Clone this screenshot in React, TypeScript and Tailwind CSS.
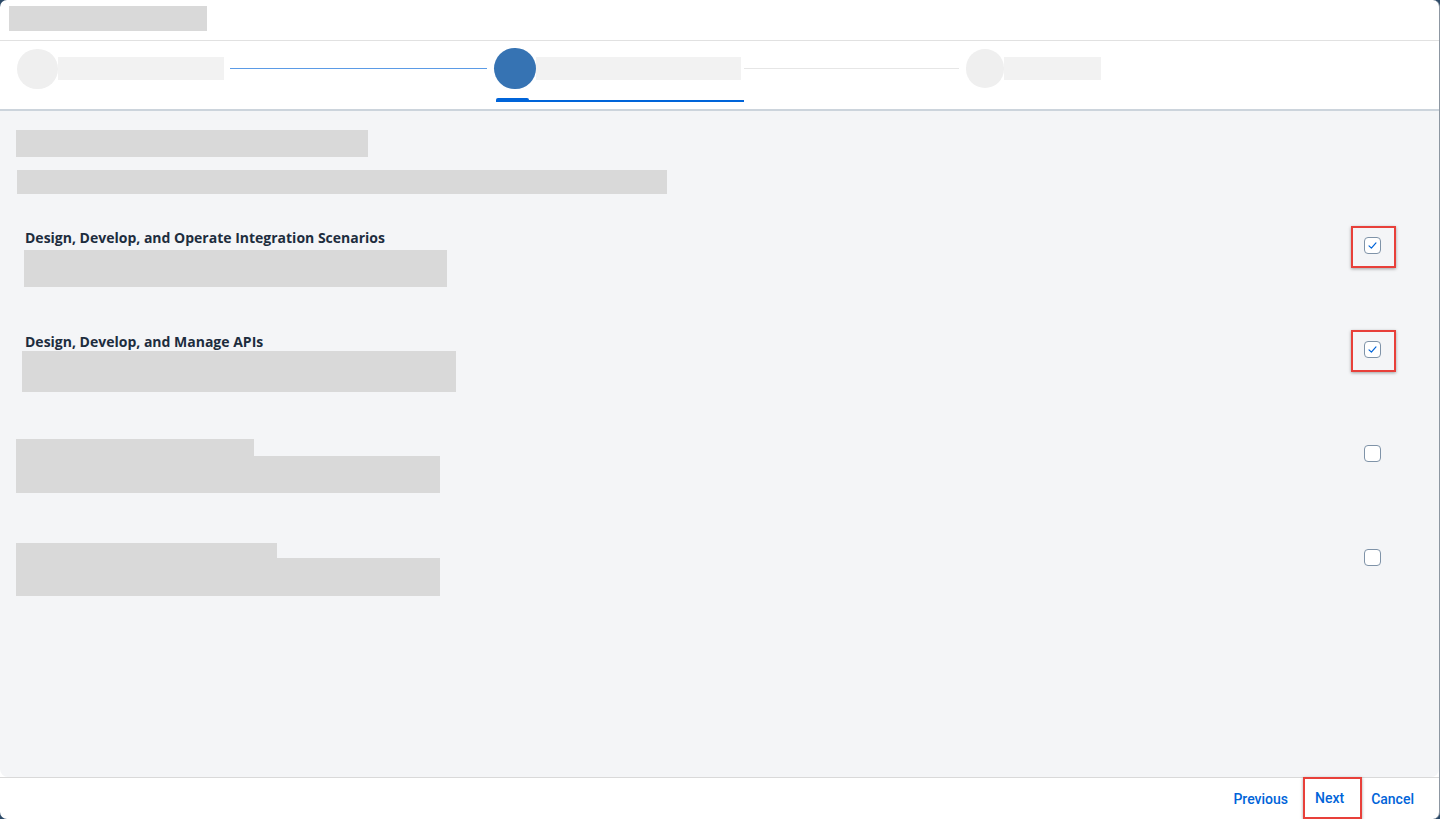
import React from 'react';

const font = { fontFamily: 'Roboto, "Liberation Sans", Arial, sans-serif' };
const titleFont = { fontFamily: '"Open Sans", "Noto Sans", Arial, sans-serif' };

interface RowProps {
  title?: string;
  checked: boolean;
  highlighted: boolean;
  children: React.ReactNode;
}

const Checkbox: React.FC<{ checked: boolean }> = ({ checked }) => (
  <div className="w-[17px] h-[17px] rounded-[4px] border border-[#7f93a8] bg-white flex items-center justify-center">
    {checked && (
      <svg width="11" height="11" viewBox="0 0 12 12" fill="none">
        <path d="M2.2 6.4 L4.8 8.9 L9.8 3.1" stroke="#0064d9" strokeWidth="1.3" strokeLinecap="round" strokeLinejoin="round" />
      </svg>
    )}
  </div>
);

const Row: React.FC<RowProps> = ({ title, checked, highlighted, children }) => (
  <div className="h-[104px] flex justify-between">
    <div className="flex flex-col">
      {title && (
        <div className="pt-[3px] pl-[9px] text-[14px] leading-[17px] font-bold text-[#1d2d3e]" style={titleFont}>
          {title}
        </div>
      )}
      {children}
    </div>
    <div
      className={
        highlighted
          ? 'w-[45px] h-[42px] border-2 border-[#e8403a] shadow-[0_1px_3px_rgba(0,0,0,0.35)] flex items-center justify-center pb-[4px] pr-[2px]'
          : 'w-[45px] h-[42px] flex items-center justify-center pb-[4px] pr-[2px]'
      }
    >
      <Checkbox checked={checked} />
    </div>
  </div>
);

export default function App() {
  return (
    <div className="w-[1440px] h-[819px] bg-[#2c4a68] overflow-hidden" style={font}>
      <div className="w-[1440px] h-[819px] bg-white rounded-[7px] border-r border-[#8d97a2] flex flex-col overflow-hidden">
        {/* title bar */}
        <div className="h-[41px] shrink-0 border-b border-[#e1e1e1] pl-[9px] pt-[6px]">
          <div className="w-[198px] h-[25px] bg-[#d9d9d9]" />
        </div>

        {/* wizard steps */}
        <div className="h-[70px] shrink-0 border-b-2 border-[#ccd4dc] pt-[7px]">
          <div className="flex items-center pl-[17px]">
            <div className="w-[41px] h-[40px] rounded-full bg-[#efefef]" />
            <div className="w-[166px] h-[23px] bg-[#f2f2f2]" />
            <div className="ml-[6px] w-[257px] h-px bg-[#5b9be6]" />
            <div className="ml-[7px] w-[42px] h-[41px] rounded-full bg-[#3673b3]" />
            <div className="w-[205px] h-[23px] bg-[#f2f2f2]" />
            <div className="ml-[3px] w-[215px] h-px bg-[#e6e6e6]" />
            <div className="ml-[7px] w-[38px] h-[39px] rounded-full bg-[#efefef]" />
            <div className="w-[97px] h-[23px] bg-[#f2f2f2]" />
          </div>
          <div className="ml-[496px] mt-[9px] w-[248px] h-[4px] flex items-end">
            <div className="w-[33px] h-[4px] rounded-t-[2px] bg-[#0064d9]" />
            <div className="flex-1 h-[2px] bg-[#0064d9]" />
          </div>
        </div>

        {/* content */}
        <div className="flex-1 bg-[#f4f5f7] rounded-b-[8px] pl-[16px] pr-[43px] pt-[19px]">
          <div className="w-[352px] h-[27px] bg-[#d9d9d9]" />
          <div className="ml-px mt-[13px] w-[650px] h-[24px] bg-[#d9d9d9]" />

          <div className="mt-[32px]">
            <Row title="Design, Develop, and Operate Integration Scenarios" checked highlighted>
              <div className="ml-[8px] mt-[4px] w-[423px] h-[37px] bg-[#d9d9d9]" />
            </Row>
            <Row title="Design, Develop, and Manage APIs" checked highlighted>
              <div className="ml-[6px] mt-px w-[434px] h-[41px] bg-[#d9d9d9]" />
            </Row>
            <Row checked={false} highlighted={false}>
              <div className="pt-[5px]">
                <div className="w-[238px] h-[17px] bg-[#d9d9d9]" />
                <div className="w-[424px] h-[37px] bg-[#d9d9d9]" />
              </div>
            </Row>
            <Row checked={false} highlighted={false}>
              <div className="pt-[5px]">
                <div className="w-[261px] h-[15px] bg-[#d9d9d9]" />
                <div className="w-[424px] h-[38px] bg-[#d9d9d9]" />
              </div>
            </Row>
          </div>
        </div>

        {/* footer */}
        <div className="h-[42px] shrink-0 border-t border-[#d9d9d9] flex items-center justify-end pr-[25px] text-[14px] font-medium text-[#0064d9]">
          <button className="h-[40px] leading-[40px]">Previous</button>
          <button className="ml-[15px] -mt-px h-[42px] pl-[10px] pr-[16px] border-2 border-[#e8403a] shadow-[0_1px_3px_rgba(0,0,0,0.35)]">
            Next
          </button>
          <button className="ml-[9px] h-[40px] leading-[40px]">Cancel</button>
        </div>
      </div>
    </div>
  );
}
